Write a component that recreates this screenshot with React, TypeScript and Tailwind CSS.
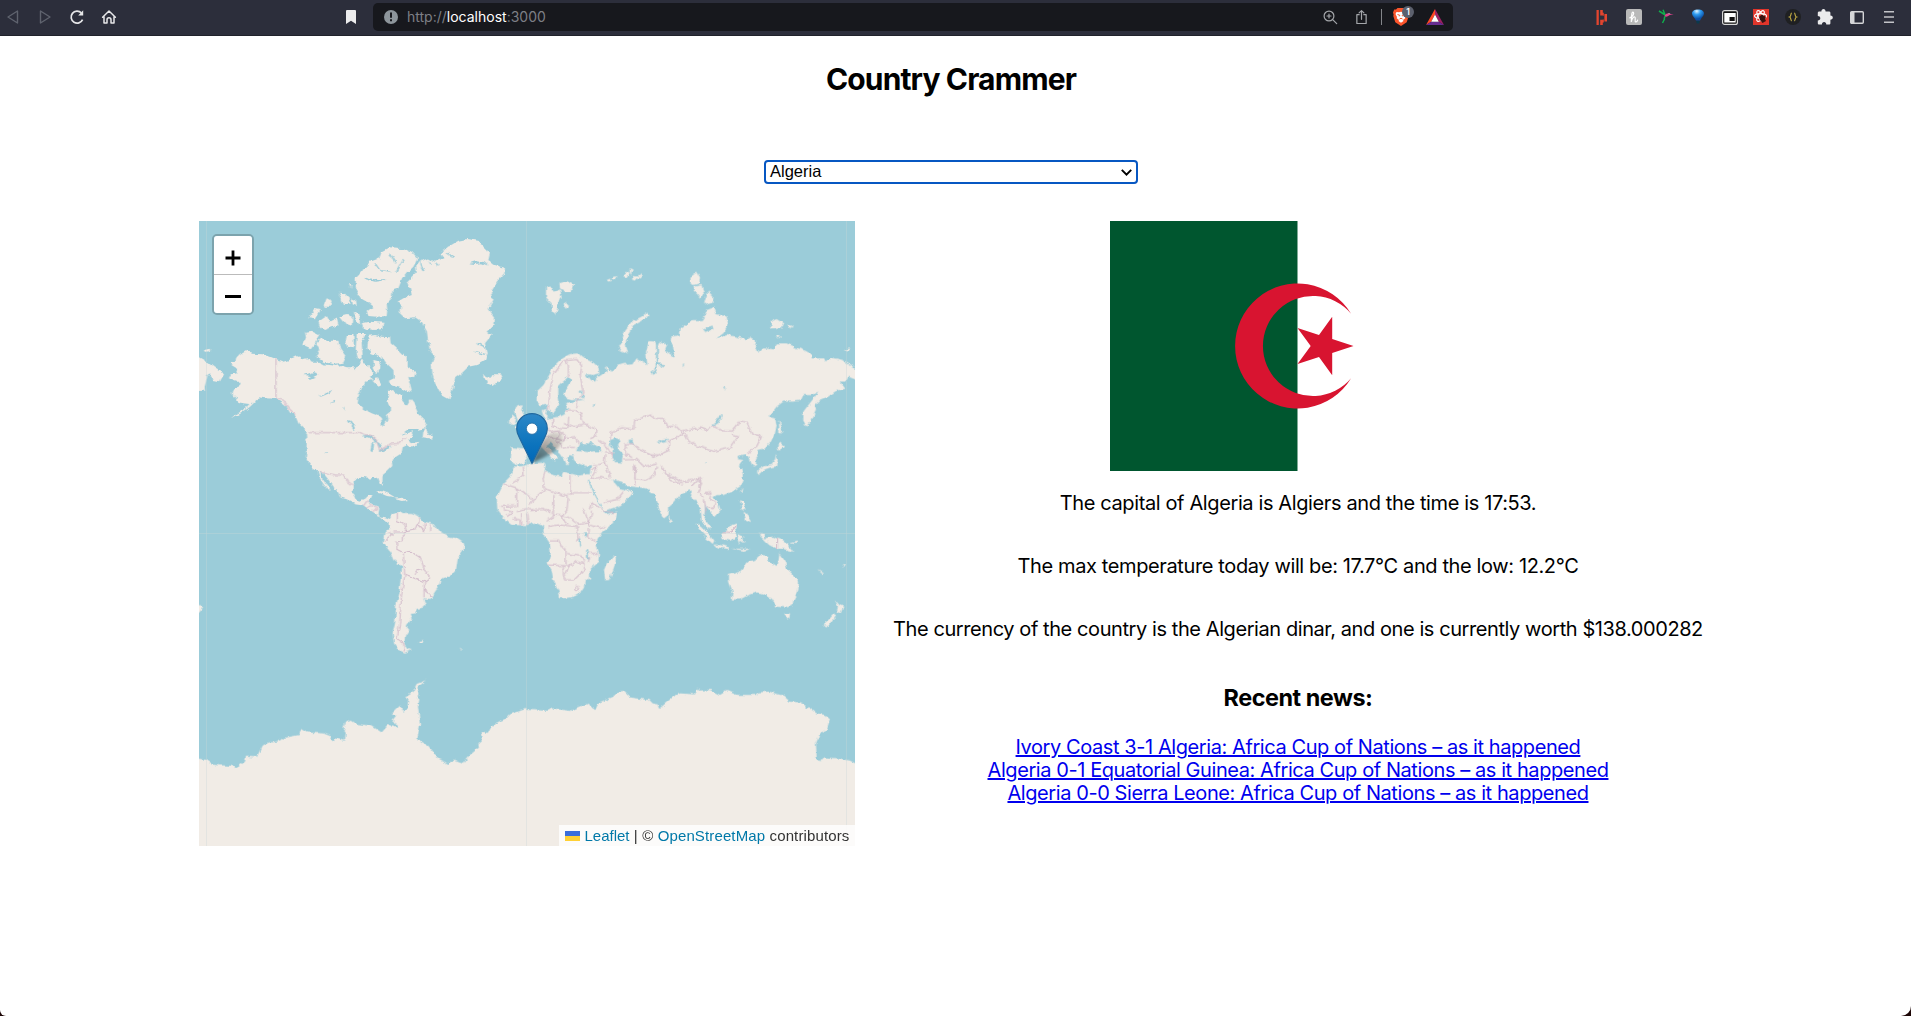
import type { ReactNode } from "react";

const WATER = "#9bccd9";
const LAND = "#f1ece6";
const BORDER = "#d3bccb";

/* ---------- Browser toolbar ---------- */

function Cell({ children }: { children: ReactNode }) {
  return <div className="flex h-8 items-center justify-center">{children}</div>;
}

function NavButtons() {
  return (
    <div className="flex items-center gap-1.5">
      <div className="flex w-[26px] justify-center">
        <svg width="14" height="16" viewBox="0 0 14 16" fill="none" stroke="#5f636e" strokeWidth="1.4" strokeLinejoin="round">
          <path d="M11.5 2v12L2 8z" />
        </svg>
      </div>
      <div className="flex w-[26px] justify-center">
        <svg width="14" height="16" viewBox="0 0 14 16" fill="none" stroke="#5f636e" strokeWidth="1.4" strokeLinejoin="round">
          <path d="M2.5 2v12L12 8z" />
        </svg>
      </div>
      <div className="flex w-[26px] justify-center">
        <svg width="16" height="16" viewBox="0 0 16 16" fill="none" stroke="#e6e6e8" strokeWidth="1.7">
          <path d="M13.6 10.6A6 6 0 1 1 12.4 3.9" />
          <path d="M14.2 1.2v5.2H9.2z" fill="#e6e6e8" stroke="none" />
        </svg>
      </div>
      <div className="flex w-[26px] justify-center">
        <svg width="16" height="16" viewBox="0 0 16 16" fill="none" stroke="#e6e6e8" strokeWidth="1.5" strokeLinejoin="round" strokeLinecap="round">
          <path d="M1.6 8.2 8 2l6.4 6.2M3 7.6V14h3v-3.3c0-1.2.8-2 2-2s2 .8 2 2V14h3V7.6" />
        </svg>
      </div>
    </div>
  );
}

function AddressBar() {
  return (
    <div className="flex h-7 w-[1080px] items-center rounded-[5px] bg-[#17181d] pr-[9px] pl-[11px]">
      <svg width="14" height="14" viewBox="0 0 14 14">
        <circle cx="7" cy="7" r="7" fill="#8d959b" />
        <path d="M6 2.6h2v5.2H6zM6 9.2h2v2H6z" fill="#17181d" />
      </svg>
      <div className="ml-[9px] font-[Inter,sans-serif] text-[14px] leading-5 text-[#7d7f85]">
        http://<span className="text-white">localhost</span>:3000
      </div>
      <div className="ml-auto flex items-center">
        <svg width="15" height="15" viewBox="0 0 15 15" fill="none" stroke="#a4a6aa" strokeWidth="1.2" strokeLinecap="round">
          <circle cx="6" cy="6" r="4.9" />
          <path d="m9.7 9.7 4 4M6 4v4M4 6h4" />
        </svg>
        <svg className="ml-[17px]" width="13" height="16" viewBox="0 0 14 16" fill="none" stroke="#a4a6aa" strokeWidth="1.3" strokeLinecap="round" strokeLinejoin="round">
          <path d="M4.5 5.5H2V15h10V5.5H9.500M7 10.500V1.200M4.400 3.600 7 1.100l2.600 2.500" />
        </svg>
        <div className="ml-[13px] h-4 w-px bg-[#83858a]" />
        <div className="relative ml-[11px] h-[18px] w-4">
          <svg width="16" height="18" viewBox="0 0 16 18">
            <path d="M4.500 0h7l1.500 1.600 1.800-.1L16 4.500l-.6 2.200.3 1.300-2 6.200L8 18l-5.700-3.800-2-6.200.3-1.300L0 4.500l1.200-3 1.800.1z" fill="#fb542b" />
            <path d="M3.500 4 6 4.300 8 3.800l2 .5 2.500-.3 1 2-1.500 3 .3 1.300L10 12l.5 1L8 14.800 5.500 13l.5-1-2.300-1.700L4 9 2.500 6z" fill="#fff" />
            <path d="m4.500 6.500 2.300.8-.4 1M11.500 6.500l-2.300.8.4 1M6.500 11 8 10.300l1.500.7" fill="none" stroke="#fb542b" />
          </svg>
          <div className="absolute top-[-2px] left-[9px] flex h-3 w-3 items-center justify-center rounded-full bg-[#5c606d] font-[Inter,sans-serif] text-[8.5px] leading-none font-semibold text-white">
            1
          </div>
        </div>
        <svg className="ml-[17px]" width="18" height="16" viewBox="0 0 18 16">
          <path d="M9 0v5.600L5.200 12.800 0 16z" fill="#ff4724" />
          <path d="M9 0l9 16-5.200-3.200L9 5.600z" fill="#9e1f63" />
          <path d="M0 16l5.200-3.200h7.600L18 16z" fill="#662d91" />
          <path d="M9 5.600 12.800 12.800H5.200z" fill="#fff" />
        </svg>
      </div>
    </div>
  );
}

function Extensions() {
  return (
    <div className="ml-auto grid w-[319px] grid-cols-10">
      <Cell>
        <svg width="12" height="15" viewBox="0 0 12 15" fill="#e3452f">
          <path d="M.5 0h2.300v15H.5zM4.200 0h2.600v5.400H4.200zM4.200 9.800h2.600V15H4.200zM8.400 4h2.600v7.500H8.400zM6.800 2.800h1v3h-1zM6.800 9.500h1v3h-1z" />
        </svg>
      </Cell>
      <Cell>
        <svg width="16" height="16" viewBox="0 0 16 16">
          <rect width="16" height="16" rx="2" fill="#b9b9b9" />
          <path d="M3.800 8.800C6.500 8 8.300 5 7.500 3.500 6.800 2.300 5.800 3.500 5.700 6L5.300 13C6 9.500 7.500 7.500 8.800 8c1.400.6-.6 4.500.8 4.900.9.200 1.700-.6 2-1.700" fill="none" stroke="#fff" strokeWidth="1.200" strokeLinecap="round" />
        </svg>
      </Cell>
      <Cell>
        <svg width="16" height="16" viewBox="0 0 16 16">
          <path d="M1 2 6.500 5.500M5 .8 7.200 6M7.500 6.500 6 9.800M6.800 9.500 4.500 14" fill="none" stroke="#0fae4c" strokeWidth="1.500" />
          <path d="M6.500 6.500C8 4.300 10 4 12 5l3.800.6-4 .5C10.500 7 9 8.200 7.500 7.600z" fill="#e2428e" />
          <path d="M10 4.400c.8-.6 1.900-.4 2.500.4z" fill="#ddd" />
        </svg>
      </Cell>
      <Cell>
        <svg width="14" height="16" viewBox="0 0 14 16">
          <defs>
            <radialGradient id="balloon" cx=".4" cy=".15" r=".7">
              <stop offset="0" stopColor="#e4f6ff" />
              <stop offset=".45" stopColor="#2f9df2" />
              <stop offset="1" stopColor="#0b4fa5" />
            </radialGradient>
          </defs>
          <path d="M1 4.500C1 2 3.400.5 7 .5s6 1.500 6 4c0 2.300-2.600 4-4 7H5C3.600 8.500 1 6.800 1 4.500z" fill="url(#balloon)" />
          <path d="M5.200 12h3.600l-.6 2.500H5.800z" fill="#0a3a4e" />
        </svg>
      </Cell>
      <Cell>
        <svg width="16" height="15" viewBox="0 0 16 15">
          <rect x=".6" y=".6" width="14.800" height="13.800" rx="2" fill="#111" stroke="#d8d8d8" strokeWidth="1.200" />
          <rect x="2.300" y="3" width="11.400" height="9.500" fill="#fff" />
          <rect x="7.500" y="7" width="5.200" height="4" fill="#111" />
        </svg>
      </Cell>
      <Cell>
        <svg width="16" height="16" viewBox="0 0 16 16">
          <rect width="16" height="16" fill="#e0352b" />
          <g fill="none" stroke="#fff" strokeWidth="1.100">
            <ellipse cx="7.500" cy="7" rx="6" ry="2.400" />
            <ellipse cx="7.500" cy="7" rx="6" ry="2.400" transform="rotate(60 7.500 7)" />
            <ellipse cx="7.500" cy="7" rx="6" ry="2.400" transform="rotate(120 7.500 7)" />
          </g>
          <path d="m6 8 3-2.500L13 8l-1 2 1 2-3.500 2L7 11z" fill="#3a1210" />
        </svg>
      </Cell>
      <Cell>
        <svg width="16" height="16" viewBox="0 0 16 16">
          <circle cx="8" cy="8" r="8" fill="#1f2022" />
          <path d="M6.800 4.200C5.300 4.200 6.500 7.400 4.600 8c1.900.6.7 3.800 2.200 3.800M9.200 4.200c1.500 0 .3 3.200 2.200 3.800-1.900.6-.7 3.800-2.200 3.800" fill="none" stroke="#c2ac45" strokeWidth="1.200" />
        </svg>
      </Cell>
      <Cell>
        <svg width="16" height="16" viewBox="0 0 16 16" fill="#ebebec">
          <path d="M6.500 0C7.800 0 8.600 1 8.600 2.400H12c.8 0 1.400.6 1.400 1.400v2.600C14.800 6.400 15.800 7.300 15.800 8.600s-1 2.200-2.400 2.200v3.400c0 .8-.6 1.400-1.400 1.400H9.300c0-1.500-.9-2.500-2.200-2.500s-2.200 1-2.200 2.500H2.200c-.8 0-1.400-.6-1.400-1.400v-2.800c1.500 0 2.500-.9 2.500-2.200S2.300 7 .8 7V3.800c0-.8.6-1.400 1.400-1.400h2.200C4.400 1 5.200 0 6.500 0z" />
        </svg>
      </Cell>
      <Cell>
        <svg width="14" height="13" viewBox="0 0 14 13">
          <rect x=".7" y=".7" width="12.600" height="11.600" rx="1" fill="none" stroke="#d5d6d8" strokeWidth="1.400" />
          <path d="M1 1h3.500v11H1z" fill="#d5d6d8" />
        </svg>
      </Cell>
      <Cell>
        <svg width="10" height="12" viewBox="0 0 10 12" fill="#c3c4c8">
          <path d="M0 0h10v1.500H0zM0 5.200h10v1.500H0zM0 10.400h10v1.500H0z" />
        </svg>
      </Cell>
    </div>
  );
}

function Toolbar() {
  return (
    <header className="flex h-9 items-center border-b border-[#20222b] bg-[#2c2e3b] pr-1.5 pb-px">
      <NavButtons />
      <svg className="ml-[224px]" width="10" height="14" viewBox="0 0 10 14" fill="#ececed">
        <path d="M1 0h8a1 1 0 0 1 1 1v13l-5-3.200L0 14V1a1 1 0 0 1 1-1z" />
      </svg>
      <div className="ml-[17px] flex">
        <AddressBar />
      </div>
      <Extensions />
    </header>
  );
}

/* ---------- World map ---------- */

const NORTH_AMERICA = [
  "120,463 140,450 143,437 160,430 175,421 185,431 215,433 235,438 258,447 280,455 297,450 315,440 330,436 333,446 350,442 362,455 385,455 400,463 425,466 440,468 450,465 470,472 490,472 492,484 500,473 512,462 510,450 517,447 525,465 535,465 540,478 548,490 540,497 545,510 528,515 515,535 505,560 503,580 520,597 545,610 565,617 573,625 575,645 583,648 592,630 588,615 600,605 600,590 593,575 597,560 595,543 608,540 620,548 635,555 635,570 645,582 655,583 662,570 670,580 680,600 685,613 700,628 711,640 705,655 680,660 655,660 635,675 660,666 672,664 665,680 655,690 662,700 688,695 680,704 660,712 650,705 635,712 632,728 618,737 605,750 607,768 590,785 578,795 577,812 580,828 572,825 565,805 555,800 535,803 515,800 495,808 488,825 488,850 495,868 510,872 525,865 530,855 547,855 540,870 538,882 560,888 565,892 562,910 570,922 585,925 598,928 598,938 578,930 558,912 540,900 515,883 495,880 470,868 450,862 445,848 430,830 412,805 400,790 390,785 396,805 410,825 425,842 415,840 400,822 390,805 383,785 370,778 355,755 348,740 350,700 348,675 350,665 338,652 325,640 315,615 300,608 290,590 270,575 255,566 225,565 205,562 195,575 180,590 160,605 140,618 120,628 140,612 165,597 178,582 160,580 145,577 140,565 125,550 128,537 150,528 152,515 135,515 117,505 122,493 145,490 140,475",
  "522,175 540,155 568,145 575,125 600,112 640,115 665,125 683,145 670,170 650,190 635,210 625,235 608,240 605,265 590,280 592,300 590,318 560,320 535,318 530,305 548,290 530,275 512,265 498,240 497,205 515,185",
  "515,340 540,335 583,338 580,357 550,360 522,355",
  "345,365 365,362 390,375 380,392 362,415 340,405 348,385",
  "378,400 395,385 415,392 445,392 450,415 468,440 460,458 430,462 400,455 378,440 388,420",
  "355,325 375,297 392,300 375,328",
  "385,335 410,318 420,335 440,325 445,345 405,360 390,350",
  "400,290 410,265 425,272 420,290",
  "447,248 460,250 475,265 480,280 462,285",
  "485,265 498,270 500,288 488,283",
  "450,320 470,315 487,320 485,350 470,345",
  "492,305 508,310 510,345 496,330",
  "470,375 490,375 492,412 475,410 468,390",
  "500,372 525,372 515,395 518,440 505,445 497,420",
  "476,222 484,225 482,235",
  "535,378 555,375 575,380 600,382 602,400 625,420 650,445 650,470 680,490 675,505 655,500 665,540 655,548 635,535 600,525 597,512 612,505 610,480 585,455 575,440 545,430 532,415",
  "550,450 572,455 570,475 560,492 552,480",
  "545,510 560,505 575,525 565,530",
  "700,665 708,652 712,670 725,675 727,686 698,682",
  "623,275 640,265 665,255 660,235 650,215 665,200 680,185 678,170 690,155 715,145 735,155 760,145 750,130 775,110 805,92 830,87 865,92 875,105 900,130 895,150 915,165 945,175 943,190 920,215 905,240 910,270 895,295 912,320 910,345 890,365 905,375 885,400 893,430 885,450 860,465 835,470 815,490 795,505 790,530 778,568 755,555 738,525 727,490 725,460 733,440 720,425 715,395 710,360 695,335 675,322 645,325 625,305 640,292",
  "880,495 895,503 905,493 930,493 937,508 910,528 890,520 895,510 880,503",
  "20,438 50,455 75,475 102,493 90,514 70,510 60,490 52,495 48,515 44,530 45,542 20,543",
  "42,420 60,416 60,424 44,425",
  "558,848 575,843 600,853 615,862 590,858 572,850",
  "612,866 635,863 655,870 635,873",
];

const EURASIA_AFRICA = [
  "2,755 5,712 40,715 62,712 50,690 35,682 60,672 85,655 100,640 105,625 98,612 95,600 112,597 108,615 118,625 150,620 165,612 163,600 180,597 165,590 175,578 200,572 222,570 200,565 185,568 165,562 160,548 175,525 183,508 175,500 160,515 145,530 145,555 148,575 140,592 125,612 115,600 112,580 92,586 80,575 80,545 100,525 115,500 130,470 155,445 180,432 205,430 215,440 240,450 265,470 268,490 245,495 225,490 240,510 255,515 262,500 275,497 290,485 288,465 297,480 305,485 320,468 340,462 370,460 380,445 400,458 412,465 408,425 418,393 435,395 445,410 450,395 470,405 465,420 490,440 495,435 492,405 482,395 483,380 510,375 512,355 545,330 575,330 585,315 590,300 612,292 620,312 650,320 655,345 640,370 615,388 650,375 680,380 710,388 720,380 738,390 735,415 750,425 760,415 795,418 800,400 830,400 850,410 885,422 905,432 905,445 945,445 950,455 962,442 1000,450 1040,478 1040,510 1015,500 1008,515 990,515 1005,535 975,545 955,560 930,570 915,585 918,600 905,630 888,650 880,635 880,605 895,585 915,560 925,545 905,555 880,555 872,572 850,575 820,575 800,590 780,615 775,622 795,625 800,645 795,670 780,700 765,715 745,720 745,735 738,745 738,765 728,770 722,755 718,740 705,735 685,740 680,748 700,750 690,765 698,790 698,810 690,830 665,845 640,855 620,855 610,862 625,880 632,900 615,918 608,912 595,900 583,887 580,915 590,935 603,958 590,955 575,930 572,895 560,870 550,868 540,840 525,848 510,855 490,880 478,890 475,915 462,925 450,900 440,875 437,852 420,848 410,835 385,832 350,828 335,815 320,812 308,805 315,820 330,838 345,840 350,835 368,848 355,865 335,885 300,897 280,903 272,885 255,850 238,815 233,800 240,790 243,765 225,768 205,760 192,750 190,738 178,735 172,745 178,758 170,767 160,745 150,730 135,715 122,698 112,705 130,728 147,740 135,754 125,745 110,728 95,712 80,720 65,725 50,740 40,760 20,765",
  "10,770 35,768 70,760 103,758 107,770 103,785 130,795 155,800 160,785 180,790 205,797 235,792 243,805 233,815 250,850 268,885 283,908 290,912 322,905 318,925 300,950 280,965 262,990 260,1005 267,1030 265,1055 240,1075 240,1105 225,1110 222,1130 205,1155 180,1163 150,1165 145,1140 130,1110 125,1080 113,1060 122,1030 120,1005 103,980 100,960 103,950 75,938 50,945 5,945 -20,925 -38,900 -40,860 -20,820 0,800 8,785",
  "282,1080 290,1060 310,1040 318,1045 312,1075 300,1107 285,1108",
  "15,602 22,586 38,583 34,600 42,615 50,640 35,655 15,655 25,640 20,620",
  "-3,645 -2,627 10,615 18,625 15,640",
  "325,408 335,395 345,360 365,335 395,320 412,308 415,318 390,335 370,345 355,370 347,400 354,430 332,420",
  "108,232 125,230 130,245 150,238 155,260 145,280 138,315 125,300 125,280 108,262",
  "148,220 170,213 192,225 185,245 165,245 150,235",
  "165,275 178,290 165,296",
  "292,208 303,203 306,212 298,215",
  "308,202 322,198 318,210 310,208",
  "342,198 350,182 360,190 352,202",
  "358,178 368,182 362,195",
  "368,198 385,200 398,188 396,198 380,210 366,206",
  "545,195 558,185 570,205 568,220 550,225 540,215",
  "550,230 575,225 582,255 570,262 555,245",
  "582,283 595,245 610,260 608,275",
  "782,335 800,327 820,340 815,352 785,355",
  "832,342 852,350 840,355",
  "800,375 813,380 805,385",
  "1003,420 1020,415 1020,425",
  "808,697 825,710 815,718 805,722 802,705",
  "798,730 803,745 802,768 780,773 765,778 745,792 745,780 765,768 785,765 795,750",
  "807,628 812,640 817,665 808,672",
  "690,845 697,833 694,850",
  "476,918 486,935 478,938",
  "690,870 700,875 707,895 695,900",
  "700,905 710,912 722,930 710,935",
];

const SOUTH_AMERICA = [
  "595,30 605,15 625,5 640,12 665,12 685,20 700,35 730,42 745,62 770,78 800,85 822,100 823,115 803,145 798,180 785,195 755,205 750,225 735,245 722,267 700,265 707,285 698,293 680,297 675,310 662,312 668,325 657,340 650,350 658,360 645,380 643,400 650,415 662,421 645,428 625,420 612,400 608,370 615,340 618,290 628,250 632,205 637,170 610,150 600,125 578,97 582,75 597,55",
  "685,393 700,390 698,398 686,398",
  "20,288 40,289 30,305 20,315",
  "808,412 818,418 816,422",
];

const OCEANIA = [
  "657,195 690,185 715,155 735,150 750,135 775,138 770,150 790,163 803,168 808,130 825,155 830,175 850,195 867,215 865,240 850,270 848,288 830,293 800,290 785,265 775,262 760,250 740,247 710,258 690,268 665,268 668,245 657,215",
  "823,310 840,310 838,325 830,328",
  "975,270 988,285 1000,290 992,310 980,305 984,290",
  "973,310 978,318 960,345 945,352 938,345 960,325",
  "747,72 765,75 765,85 785,80 815,90 835,105 850,125 825,118 800,115 780,105 770,95",
  "632,68 650,62 665,45 680,40 675,60 680,75 665,92 640,88",
  "685,72 705,82 694,82 705,100 692,92 688,103 683,88",
  "556,40 575,50 600,75 613,92 608,102 590,85 570,62",
  "613,103 640,106 660,113 655,117 620,112",
  "665,115 690,117 722,116 700,123",
  "840,100 862,94 858,102",
  "925,180 942,190 936,192",
  "995,165 1005,160 1000,170",
];

const ANTARCTICA =
  "20,745 50,750 70,765 130,768 138,775 165,755 168,740 200,742 215,710 235,698 260,695 290,682 328,675 332,657 350,667 400,670 420,678 430,695 437,685 465,692 467,665 460,655 465,637 485,632 500,642 545,648 575,667 595,645 625,655 608,630 620,615 605,612 630,587 640,605 652,595 655,565 645,560 668,545 680,522 710,510 682,532 688,550 683,580 690,645 682,687 715,708 745,745 775,762 790,752 818,762 840,735 867,712 865,700 878,688 875,668 893,672 905,648 945,630 960,613 1007,597 1010,600 1070,602 1088,595 1140,603 1165,592 1190,582 1217,597 1225,580 1270,560 1285,545 1300,543 1320,562 1375,570 1385,580 1403,583 1407,597 1450,560 1470,550 1515,553 1522,533 1530,542 1560,540 1590,555 1610,543 1640,555 1695,555 1705,547 1735,545 1780,557 1800,575 1830,577 1860,595 1880,610 1905,615 1920,628 1910,658 1890,670 1878,700 1880,745 1890,757 1900,742 1950,745 1980,752 2005,765 2005,1030 20,1030";

const LAKES_WEST =
  "M343,495l15,-5 12,-4 12,4 -10,6 4,8 -14,6 -6,-6 6,-5zM388,558l14,-4 10,-9 14,-6 -6,9 -16,8 -12,4zM418,580l18,-8 2,4zM460,595l4,8 -2,-14zM472,630l10,2 6,10 8,14 -6,0 -8,-12zM512,678l20,-4 16,6 16,16 -8,2 -8,-10 -16,-6zM545,700l8,-6 -2,20 -4,10 -6,-4zM560,692l8,4 8,14 -8,4zM565,722l18,-8 22,-6 -10,8 -26,10zM405,728l6,2 -4,3zM690,170l8,14 6,-2zM715,150l6,16 4,-2zM735,158l8,14 2,-10zM770,130l20,14 2,-4 -18,-12zM838,160l18,-6 26,2 14,12 -20,-8 -22,2z";

const INLETS_WEST =
  "M525,205l30,8 30,-4M555,160l15,22 30,4M600,130l18,30M640,150l-20,35M860,400l25,12M855,425l30,8M700,180l-8,-20";

const SEAS_EAST =
  "M198,722l7,-16 10,-8 14,6 10,-10 6,8 20,8 8,8 0,6 -20,0 -18,2 -24,-2zM300,690l18,-6 14,6 -8,14 6,16 8,14 -2,24 -18,-2 -10,-20 4,-18 -12,-12zM605,645l14,-12 14,-20 2,8 -10,18 -16,10zM355,690l12,-2 4,12 -10,2zM440,693l22,-6 14,0 -8,6 -20,5zM248,580l8,2 -4,6zM212,552l8,4 4,10 -8,-4zM205,545l10,-4 -2,12zM580,360l12,-6 16,-4 2,8 -22,8zM515,472l6,-10 2,4zM637,532l8,2 0,8zM219,970l12,0 0,10 -10,2zM582,758l4,-3 2,4z";

const CHANNELS_EAST = "M441,395l0,45 -2,42 -14,10M440,462l24,4M207,985l4,22M231,1020l5,28";

const BORDERS_WEST =
  "M258,447V566l20,5 20,25 18,18M355,668H505M505,664l14,8 20,4 20,14 10,30 34,-18 26,-2 8,-16 12,0M388,785l50,10 20,0 14,18 16,12M520,888l10,-14 10,0M530,895l12,-8 20,6M548,905l12,-10";

const BORDERS_EAST =
  "M115,600l5,-60 10,-45 30,-42 40,-5 15,20 -4,30 8,50 -16,24 -3,22M175,500v-35l-10,-15M165,603h30l18,10 8,30 40,15 -2,20 -18,8M165,640l20,10 35,-4M128,625v26l46,4 2,-35M113,655l14,10 22,-2 20,16 -8,14 -30,-10 -24,-4M150,668l-12,24 20,22 14,-2M165,685l32,-2 8,20M170,712h25M262,690l30,20 15,28M285,728l22,2 2,15M300,690l4,-25 30,-12 38,4 2,-26 48,-16 14,10 20,0 20,24 22,0 20,20M518,668l-18,15 -24,10 0,28 -30,14 -25,0 -40,-20 -15,-15 -20,2v30l20,10M520,665l52,-14 18,10 20,-12 30,14 28,0 22,-30 20,4 16,36 28,8 -14,28 -28,20M520,668l10,20 20,16 60,20 48,-10 20,-28 8,-8 -20,-6M340,750l40,-2 22,22 38,-8M372,765l6,62M378,765l-4,40M440,770l-8,25 -24,15 -28,-4M450,765l24,30 40,20 30,-4 30,-6 -8,25M415,730l14,12 14,-6M480,800l-4,10 40,12M545,830l20,-20 10,10 -12,25 20,20M585,850l18,-2 -4,18 18,14 -8,16 -20,-4M580,870l6,40M285,735l-2,24 -14,4 -22,2M283,758l20,45M243,780l20,-10 -20,36 30,-4 26,8M278,878l44,-10 20,-25M183,795v53h60M175,855l8,-10M105,785l-6,20 4,30 72,25 -4,40 -18,22 22,20M72,868l-30,-20 -24,-15 -38,-12M40,770l2,25 -35,25M103,838l-32,30 -12,16M20,835v52l-50,2M132,852l-2,68 -20,14M60,902l40,-4 24,10M20,905l30,-6 20,0M10,925l20,5 0,15M35,912v32M50,910l4,32M-20,895l28,10M-10,920l18,-12M130,915l44,6 30,22 34,-4M240,900l8,-22 30,25 38,5M238,940l-18,-44M245,905l-8,40 30,8 20,-4M115,950l30,-5 60,5 2,32 -8,12M118,993h28l8,20 14,0 0,50M235,952l-2,28 26,16M115,1065l45,2 30,0M160,1068v30l4,12 28,0 28,-28 2,-20 -24,-10 -20,14 -14,30M172,1030l30,8 12,0 8,16M238,1030h26M194,1135a6,6 0 1 0 12,0a6,6 0 1 0 -12,0M235,1060l4,-18";

const BORDERS_SOUTH =
  "M622,8l0,24 22,8 4,22 -10,4 -28,0M597,65l12,8 -26,22M640,70l0,22 -20,4 0,22 20,10M688,25l-4,20 18,18M705,40v24M722,42v22M648,62l30,-6 8,-14M640,128l22,-4 30,20 10,32 -22,6 -4,10M640,130l4,62 60,24 18,-12 -22,-28M645,192l-10,60 -6,90 -8,44 20,14 2,24M704,216l-2,24 22,18M702,240v22";

const BORDERS_OCEANIA = "M803,87v30M635,65l28,2 15,-20";

function Shapes({ list }: { list: string[] }) {
  return (
    <>
      {list.map((points) => (
        <polygon key={points} points={points} />
      ))}
    </>
  );
}

function WorldMap() {
  return (
    <svg className="block h-full w-full" viewBox="0 0 1968 1875" preserveAspectRatio="none">
      <defs>
        <filter id="coast" x="0" y="0" width="1968" height="1875" filterUnits="userSpaceOnUse">
          <feTurbulence type="fractalNoise" baseFrequency="0.055" numOctaves="3" seed="4" result="n" />
          <feDisplacementMap in="SourceGraphic" in2="n" scale="14" xChannelSelector="R" yChannelSelector="G" />
        </filter>
      </defs>
      <rect width="1968" height="1875" fill={WATER} />
      <g filter="url(#coast)">
        <g fill={LAND}>
          <g transform="translate(-27 -33)">
            <Shapes list={NORTH_AMERICA} />
            <path d={LAKES_WEST} fill={WATER} />
            <path d={INLETS_WEST} fill="none" stroke={WATER} strokeWidth="4" />
          </g>
          <g transform="translate(933 -33)">
            <Shapes list={EURASIA_AFRICA} />
            <path d={SEAS_EAST} fill={WATER} />
            <path d={CHANNELS_EAST} fill="none" stroke={WATER} strokeWidth="6" />
          </g>
          <g transform="translate(-27 867)">
            <Shapes list={SOUTH_AMERICA} />
            <polygon points={ANTARCTICA} />
          </g>
          <g transform="translate(933 867)">
            <Shapes list={OCEANIA} />
          </g>
        </g>
        <g fill="none" stroke={BORDER} strokeWidth="3.2" strokeLinejoin="round">
          <path d={BORDERS_WEST} transform="translate(-27 -33)" />
          <path d={BORDERS_EAST} transform="translate(933 -33)" />
          <path d={BORDERS_SOUTH} transform="translate(-27 867)" />
          <path d={BORDERS_OCEANIA} transform="translate(933 867)" />
        </g>
      </g>
      <path d="M22.500 0V1875M982.500 0V1875M1942.500 0V1875M0 937.500H1968" stroke="#c9d8d6" strokeOpacity=".35" strokeWidth="3" />
    </svg>
  );
}

function Marker() {
  return (
    <svg className="absolute top-[192px] left-[317px]" width="58" height="52" viewBox="0 0 58 52">
      <defs>
        <linearGradient id="pin" x1="0" y1="0" x2="0" y2="1">
          <stop offset="0" stopColor="#2e88c7" />
          <stop offset=".6" stopColor="#0d74bd" />
          <stop offset="1" stopColor="#0068b8" />
        </linearGradient>
        <linearGradient id="shade" x1="0" y1="1" x2=".7" y2="0">
          <stop offset="0" stopColor="#000" stopOpacity=".55" />
          <stop offset="1" stopColor="#000" stopOpacity=".12" />
        </linearGradient>
        <filter id="soft" x="-20%" y="-20%" width="140%" height="140%">
          <feGaussianBlur stdDeviation="1.500" />
        </filter>
      </defs>
      <path d="M16 50C22 38 26 24 36 20c9-3 13 3 9 11C40 40 26 45 16 50z" fill="url(#shade)" filter="url(#soft)" />
      <path d="M16 .7C7.500.7.700 7.300.700 15.700c0 3.400 1 5.800 2.600 8.800L16 50.500 28.700 24.500c1.600-3 2.600-5.400 2.600-8.800C31.300 7.300 24.500.7 16 .7z" fill="url(#pin)" stroke="#22689f" strokeWidth="1.200" />
      <circle cx="16" cy="15.700" r="5.600" fill="#fff" stroke="#22689f" strokeWidth=".8" />
    </svg>
  );
}

function MapPanel() {
  return (
    <section className="relative h-[625px] w-[656px] overflow-hidden">
      <WorldMap />
      <Marker />
      <div className="absolute top-[13px] left-[13px] h-[81px] w-[41.5px] rounded-[5px] border-2 border-black/20 bg-clip-padding">
        <div className="flex h-full flex-col overflow-hidden rounded-[3px] bg-white">
          <div className="flex flex-1 items-center justify-center border-b border-[#bbb] pt-[5px] pl-px">
            <svg width="16" height="16" viewBox="0 0 16 16">
              <path d="M6.600 .500h2.800v6.100h6.100v2.800H9.400v6.100H6.600V9.400H.500V6.600h6.100z" fill="#000" />
            </svg>
          </div>
          <div className="flex flex-1 items-center justify-center pt-[5px] pl-px">
            <svg width="16" height="3" viewBox="0 0 16 3">
              <path d="M0 0h16v3H0z" fill="#000" />
            </svg>
          </div>
        </div>
      </div>
      <div className="absolute right-0 bottom-0 flex h-[21px] w-[296px] items-center bg-white/80 pl-1.5 font-['Liberation_Sans',Arial,sans-serif] text-[15px] leading-[21px] whitespace-pre text-[#333]">
        <svg width="15" height="10" viewBox="0 0 15 10">
          <path d="M0 0h15v5H0z" fill="#3a6edb" />
          <path d="M0 5h15v5H0z" fill="#ffd034" />
        </svg>
        <span className="ml-[4.5px] text-[#0078a8]">Leaflet</span>
        <span className="tracking-[0.13px]">
          {" | © "}
          <span className="text-[#0078a8]">OpenStreetMap</span>
          {" contributors"}
        </span>
      </div>
    </section>
  );
}

/* ---------- Country details ---------- */

function AlgeriaFlag() {
  return (
    <svg className="mr-px block h-[250px] w-[375px]" viewBox="0 0 375 250">
      <path d="M0 0h375v250H0z" fill="#fff" />
      <path d="M0 0h187.500v250H0z" fill="#00562f" />
      <path
        d="M241.100 92.700A62.500 62.500 0 1 0 241.100 157.300 50 50 0 1 1 241.100 92.700z"
        fill="#d81430"
      />
      <path d="M243.500 125 222.200 131.900V154.200L209 136.100 187.500 143.100 200.700 125 187.500 106.900 209 113.900 222.200 95.800V118.100z" fill="#d81430" />
    </svg>
  );
}

const news = [
  "Ivory Coast 3-1 Algeria: Africa Cup of Nations – as it happened",
  "Algeria 0-1 Equatorial Guinea: Africa Cup of Nations – as it happened",
  "Algeria 0-0 Sierra Leone: Africa Cup of Nations – as it happened",
];

function Details() {
  return (
    <section className="flex w-[810px] flex-col items-center text-[20px] leading-[23px] tracking-[-0.42px] whitespace-nowrap">
      <AlgeriaFlag />
      <div className="mt-[21px] flex flex-col items-center gap-10">
        <p className="tracking-[-0.38px]">The capital of Algeria is Algiers and the time is 17:53.</p>
        <p className="tracking-[-0.38px]">The max temperature today will be: 17.7°C and the low: 12.2°C</p>
        <p>The currency of the country is the Algerian dinar, and one is currently worth $138.000282</p>
      </div>
      <h3 className="mt-[43px] text-[23.4px] leading-7 font-bold tracking-[-0.45px]">Recent news:</h3>
      <ul className="mt-6 flex flex-col items-center">
        {news.map((title) => (
          <li key={title}>
            <a href="#" className="text-[#0000ee] underline">
              {title}
            </a>
          </li>
        ))}
      </ul>
    </section>
  );
}

function CountrySelect() {
  return (
    <div className="mt-[63px] flex h-6 w-[374px] items-center justify-between rounded-[4px] border-2 border-[#0757c2] bg-white pr-[4px] pb-px pl-1 font-['Liberation_Sans',Arial,sans-serif] text-[16.5px] leading-[19px]">
      <span>Algeria</span>
      <svg className="mt-px" width="11" height="7" viewBox="0 0 11 7" fill="none" stroke="#000" strokeWidth="2">
        <path d="m.800.900 4.700 4.700L10.200.900" />
      </svg>
    </div>
  );
}

export default function App() {
  return (
    <div className="h-[1016px] bg-[#1c0606]">
      <div className="flex h-full flex-col overflow-hidden rounded-bl-[6px] rounded-br-[10px] bg-white font-[Inter,sans-serif] text-black">
        <Toolbar />
        <main className="flex w-[1902px] flex-col items-center">
          <h1 className="mt-[25px] text-[30px] leading-9 font-bold tracking-[-0.87px]">Country Crammer</h1>
          <CountrySelect />
          <div className="mt-[37px] flex gap-[38px]">
            <MapPanel />
            <Details />
          </div>
        </main>
      </div>
    </div>
  );
}
